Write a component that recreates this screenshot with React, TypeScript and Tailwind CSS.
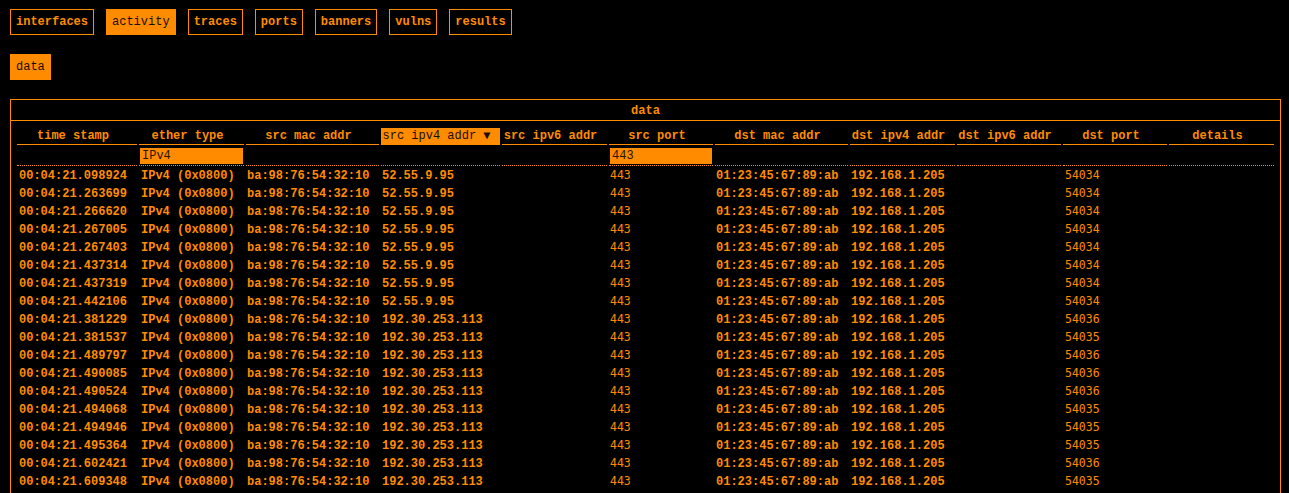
import React from "react";

const tabs = ["interfaces", "activity", "traces", "ports", "banners", "vulns", "results"];

const cols = [
  "time stamp",
  "ether type",
  "src mac addr",
  "src ipv4 addr",
  "src ipv6 addr",
  "src port",
  "dst mac addr",
  "dst ipv4 addr",
  "dst ipv6 addr",
  "dst port",
  "details",
];

const rows: [string, string, string][] = [
  ["00:04:21.098924", "52.55.9.95", "54034"],
  ["00:04:21.263699", "52.55.9.95", "54034"],
  ["00:04:21.266620", "52.55.9.95", "54034"],
  ["00:04:21.267005", "52.55.9.95", "54034"],
  ["00:04:21.267403", "52.55.9.95", "54034"],
  ["00:04:21.437314", "52.55.9.95", "54034"],
  ["00:04:21.437319", "52.55.9.95", "54034"],
  ["00:04:21.442106", "52.55.9.95", "54034"],
  ["00:04:21.381229", "192.30.253.113", "54036"],
  ["00:04:21.381537", "192.30.253.113", "54035"],
  ["00:04:21.489797", "192.30.253.113", "54036"],
  ["00:04:21.490085", "192.30.253.113", "54036"],
  ["00:04:21.490524", "192.30.253.113", "54036"],
  ["00:04:21.494068", "192.30.253.113", "54035"],
  ["00:04:21.494946", "192.30.253.113", "54035"],
  ["00:04:21.495364", "192.30.253.113", "54035"],
  ["00:04:21.602421", "192.30.253.113", "54036"],
  ["00:04:21.609348", "192.30.253.113", "54035"],
];

const mono = "font-['Liberation_Mono',monospace]";
const sansMono = "font-['DejaVu_Sans_Mono',monospace]";
const cell = "font-bold leading-[16px] pt-[2px] whitespace-nowrap";
const port = `${sansMono} text-[11.5px] leading-[16px] pt-[1px] pb-[1px]`;

export default function App() {
  return (
    <div
      className={`min-h-[493px] bg-black text-[#ff8c00] ${mono} text-[12px] leading-[14px] pl-[10px] pr-[8px] pt-[9px]`}
    >
      <div className="flex gap-[12px]">
        {tabs.map((t) =>
          t === "activity" ? (
            <div key={t} className="border border-[#ff8c00] bg-[#ff8c00] text-[#1a0d00] px-[5px] py-[5px]">
              {t}
            </div>
          ) : (
            <div key={t} className="border border-[#ff8c00] font-bold px-[5px] py-[5px]">
              {t}
            </div>
          )
        )}
      </div>
      <div className="flex mt-[19px]">
        <div className="border border-[#ff8c00] bg-[#ff8c00] text-[#1a0d00] px-[5px] py-[5px]">data</div>
      </div>
      <div className="mt-[19px] border border-[#ff8c00]">
        <div className="text-center font-bold pt-[4px] pb-[2px] border-b border-[#ff8c00]">data</div>
        <div className="px-[6px] pt-[7px] pb-[12px]">
          <div className="grid grid-cols-[120px_105px_133px_119px_105px_104px_133px_105px_104px_104px_1fr] gap-x-[2px]">
            {cols.map((c) =>
              c === "src ipv4 addr" ? (
                <div
                  key={c}
                  className="bg-[#ff8c00] text-[#1a0d00] text-center pr-[8px] py-[1px] border-b border-[#ff8c00] whitespace-nowrap"
                >
                  src ipv4 addr ▼
                </div>
              ) : (
                <div
                  key={c}
                  className="font-bold text-center pr-[8px] py-[1px] border-b border-[#ff8c00] whitespace-nowrap overflow-hidden"
                >
                  {c}
                </div>
              )
            )}
            {cols.map((c) => (
              <div key={"f" + c} className="pt-[3px] pb-[1px] border-b border-dotted border-[#ff8c00]">
                {c === "ether type" || c === "src port" ? (
                  <div className="h-[16px] ml-[1px] mr-[1px] bg-[#ff8c00] text-[#2a1500] pl-[2px] leading-[16px]">
                    {c === "ether type" ? "IPv4" : "443"}
                  </div>
                ) : (
                  <div className="h-[16px]" />
                )}
              </div>
            ))}
            {rows.map((r, i) => (
              <React.Fragment key={i}>
                <div className={`${cell} pl-[2px]`}>{r[0]}</div>
                <div className={`${cell} pl-[2px]`}>IPv4 (0x0800)</div>
                <div className={`${cell} pl-[1px]`}>ba:98:76:54:32:10</div>
                <div className={`${cell} pl-[1px]`}>{r[1]}</div>
                <div className="leading-[18px]"></div>
                <div className={`${port} pl-[1px]`}>443</div>
                <div className={`${cell} pl-[1px]`}>01:23:45:67:89:ab</div>
                <div className={`${cell} pl-[1px]`}>192.168.1.205</div>
                <div className="leading-[18px]"></div>
                <div className={`${port} pl-[2px]`}>{r[2]}</div>
                <div className="leading-[18px]"></div>
              </React.Fragment>
            ))}
          </div>
        </div>
      </div>
    </div>
  );
}
